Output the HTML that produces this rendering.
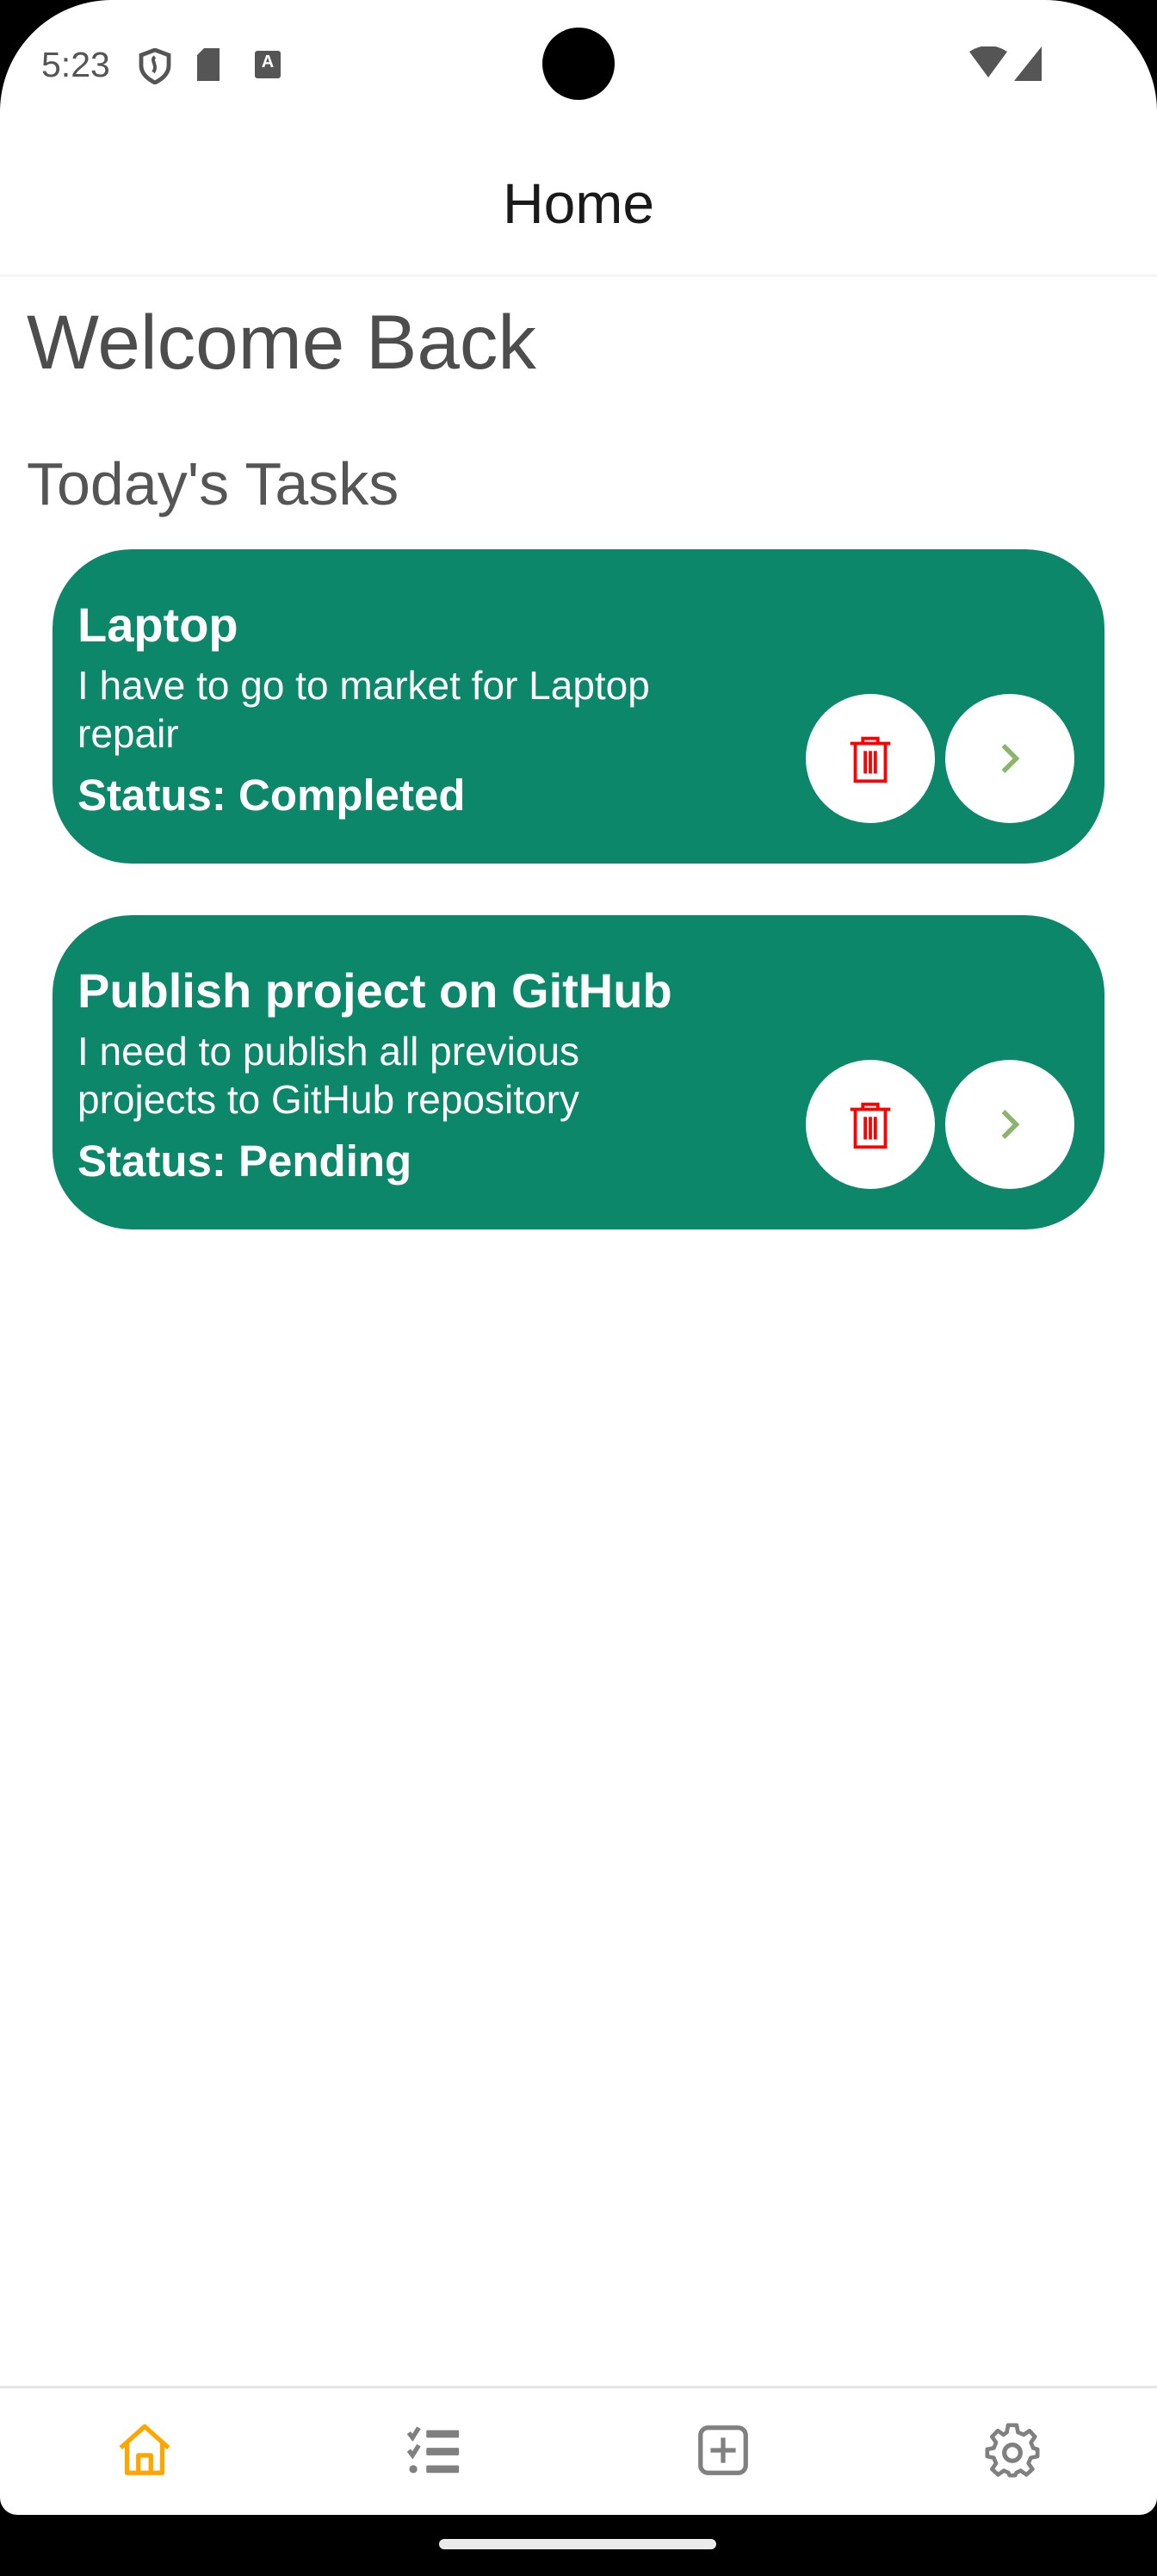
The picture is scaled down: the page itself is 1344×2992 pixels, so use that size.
<!DOCTYPE html>
<html><head><meta charset="utf-8"><style>
*{margin:0;padding:0;box-sizing:border-box}
html,body{width:1344px;height:2992px;background:#000;overflow:hidden;font-family:"Liberation Sans",Roboto,sans-serif}
.screen{position:absolute;left:0;top:0;width:1344px;height:2921px;background:#fff;border-radius:130px 130px 20px 20px;overflow:hidden}
.abs{position:absolute}
.card{position:absolute;left:61px;width:1222px;height:365px;background:#0C8769;border-radius:92px;color:#fff}
.card .t{position:absolute;left:29px;font-weight:bold;font-size:56px;line-height:60px;white-space:nowrap}
.card .d{position:absolute;left:29px;font-size:46px;line-height:56px;width:720px}
.card .s{position:absolute;left:29px;font-weight:bold;font-size:51px;line-height:60px;white-space:nowrap}
.btn{position:absolute;width:150px;height:150px;border-radius:50%;background:#fff;top:168px}
</style></head><body>
<div class="screen">
  <div class="abs" style="left:48px;top:52px;font-size:41px;color:#555">5:23</div>
  <svg class="abs" style="left:160px;top:56px" width="40" height="42" viewBox="0 0 20 21"><path d="M10 1 L18 4 V10 C18 15 14 18 10 20 C6 18 2 15 2 10 V4 Z" fill="none" stroke="#555" stroke-width="2.4"/><path d="M10 5 C7 7 12 10 9 14" fill="none" stroke="#555" stroke-width="2"/></svg>
  <svg class="abs" style="left:229px;top:56px" width="28" height="38" viewBox="0 0 14 19"><path d="M4 0 H13 V19 H0 V4 Z" fill="#555"/></svg>
  <div class="abs" style="left:296px;top:59px;width:30px;height:32px;background:#555;border-radius:3px;color:#fff;font-size:20px;font-weight:bold;text-align:center;line-height:26px">A</div>
  <div class="abs" style="left:630px;top:32px;width:84px;height:84px;border-radius:50%;background:#000"></div>
  <svg class="abs" style="left:1126px;top:54px" width="92" height="40" viewBox="0 0 46 20"><path d="M0 3 Q11 -4 22 3 L11 18 Z" fill="#555"/><path d="M42 0 V20 H26 Z" fill="#555"/></svg>
  <div class="abs" style="left:0;top:198px;width:1344px;text-align:center;font-size:66px;color:#1a1a1a">Home</div>
  <div class="abs" style="left:0;top:318px;width:1344px;height:4px;background:#f6f6f6"></div>
  <div class="abs" style="left:31px;top:346px;font-size:89px;color:#4d4d4d">Welcome Back</div>
  <div class="abs" style="left:31px;top:522px;font-size:70px;color:#555">Today's Tasks</div>

  <div class="card" style="top:638px">
    <div class="t" style="top:58px">Laptop</div>
    <div class="d" style="top:130px">I have to go to market for Laptop repair</div>
    <div class="s" style="top:256px">Status: Completed</div>
    <div class="btn" style="left:875px"><svg style="position:absolute;left:40px;top:40px" width="70" height="70" viewBox="0 0 24 24"><path d="M4 6 H20 M9 6 V4 H15 V6 M6 6 V21 H18 V6 M10 9 V18 M12 9 V18 M14 9 V18" fill="none" stroke="#f00" stroke-width="1.3"/></svg></div>
    <div class="btn" style="left:1037px"><svg style="position:absolute;left:45px;top:45px" width="60" height="60" viewBox="0 0 24 24"><path d="M9 6 L15 12 L9 18" fill="none" stroke="#8AB56A" stroke-width="2.2"/></svg></div>
  </div>
  <div class="card" style="top:1063px">
    <div class="t" style="top:58px">Publish project on GitHub</div>
    <div class="d" style="top:130px">I need to publish all previous projects to GitHub repository</div>
    <div class="s" style="top:256px">Status: Pending</div>
    <div class="btn" style="left:875px"><svg style="position:absolute;left:40px;top:40px" width="70" height="70" viewBox="0 0 24 24"><path d="M4 6 H20 M9 6 V4 H15 V6 M6 6 V21 H18 V6 M10 9 V18 M12 9 V18 M14 9 V18" fill="none" stroke="#f00" stroke-width="1.3"/></svg></div>
    <div class="btn" style="left:1037px"><svg style="position:absolute;left:45px;top:45px" width="60" height="60" viewBox="0 0 24 24"><path d="M9 6 L15 12 L9 18" fill="none" stroke="#8AB56A" stroke-width="2.2"/></svg></div>
  </div>

  <div class="abs" style="left:0;top:2771px;width:1344px;height:3px;background:#e6e6e6"></div>
  <svg class="abs" style="left:133px;top:2811px" width="70" height="70" viewBox="0 0 24 24"><path d="M2.5 11 L12 2.5 L21.5 11 M5 9 V21 H19 V9 M9.5 21 V14 H14.5 V21" fill="none" stroke="#FFA500" stroke-width="1.8" stroke-linejoin="round"/></svg>
  <svg class="abs" style="left:469px;top:2811px" width="70" height="70" viewBox="0 0 24 24"><path d="M2 5 L3.5 7 L6 3 M2 12 L3.5 14 L6 10" fill="none" stroke="#808080" stroke-width="1.8"/><circle cx="3.8" cy="19.5" r="1.6" fill="#808080"/><rect x="9" y="4" width="13" height="3" rx=".5" fill="#808080"/><rect x="9" y="11" width="13" height="3" rx=".5" fill="#808080"/><rect x="9" y="18" width="13" height="3" rx=".5" fill="#808080"/></svg>
  <svg class="abs" style="left:805px;top:2811px" width="70" height="70" viewBox="0 0 24 24"><rect x="3" y="3" width="18" height="18" rx="3" fill="none" stroke="#808080" stroke-width="1.8"/><path d="M12 7 V17 M7 12 H17" stroke="#808080" stroke-width="1.8"/></svg>
  <svg class="abs" style="left:1141px;top:2811px" width="70" height="70" viewBox="0 0 24 24"><path d="M10.3 2 H13.7 L14.2 4.8 L16.5 5.8 L18.8 4.2 L21 6.6 L19.4 8.9 L20.3 11.1 L22 11.6 V14.4 L19.3 15 L18.4 17.2 L20 19.5 L17.6 21.7 L15.3 20.1 L13.6 20.9 L13.1 22 H10.9 L10.4 20.9 L8.6 20.1 L6.3 21.7 L3.9 19.5 L5.5 17.2 L4.6 15 L2 14.4 V11.6 L4.6 11.1 L5.5 8.9 L3.9 6.6 L6.2 4.2 L8.5 5.8 L9.8 4.8 Z" fill="none" stroke="#808080" stroke-width="1.6" stroke-linejoin="round"/><circle cx="12" cy="13" r="3.2" fill="none" stroke="#808080" stroke-width="1.8"/></svg>
</div>
<div class="abs" style="left:510px;top:2949px;width:322px;height:12px;border-radius:6px;background:#ebebeb"></div>
</body></html>
